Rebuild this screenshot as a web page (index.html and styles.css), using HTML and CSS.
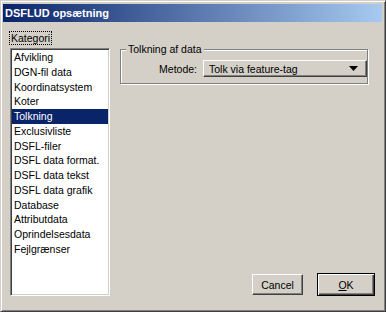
FILE: index.html
```html
<!DOCTYPE html>
<html lang="da">
<head>
    <meta charset="UTF-8">
    <title>DSFLUD opsætning</title>
    <link rel="stylesheet" href="styles.css">
</head>
<body>
    <div class="window">
        <div class="titlebar">DSFLUD opsætning</div>

        <div class="content">
            <div class="left-col">
                <span class="label-focus">Kategori</span>
                <ul class="listbox">
                    <li>Afvikling</li>
                    <li>DGN-fil data</li>
                    <li>Koordinatsystem</li>
                    <li>Koter</li>
                    <li class="selected">Tolkning</li>
                    <li>Exclusivliste</li>
                    <li>DSFL-filer</li>
                    <li>DSFL data format.</li>
                    <li>DSFL data tekst</li>
                    <li>DSFL data grafik</li>
                    <li>Database</li>
                    <li>Attributdata</li>
                    <li>Oprindelsesdata</li>
                    <li>Fejlgrænser</li>
                </ul>
            </div>

            <div class="right-col">
                <fieldset class="groupbox">
                    <legend>Tolkning af data</legend>
                    <div class="field-row">
                        <span>Metode:</span>
                        <div class="combo">
                            <span>Tolk via feature-tag</span>
                            <svg class="combo-arrow" width="9" height="5" viewBox="0 0 9 5">
                                <polygon points="0,0 9,0 4.5,5" fill="#000"/>
                            </svg>
                        </div>
                    </div>
                </fieldset>

                <div class="buttons">
                    <button class="btn">Cancel</button>
                    <button class="btn default"><u>O</u>K</button>
                </div>
            </div>
        </div>
    </div>
</body>
</html>
```

FILE: styles.css
```css
body {
    margin: 0;
    font-family: 'Liberation Sans', Arial, sans-serif;
    font-size: 10.5px;
    color: #000;
    background-color: #d4d0c8;
}

.window {
    box-sizing: border-box;
    width: 386px;
    height: 312px;
    background-color: #d4d0c8;
    border-top: 1px solid #d4d0c8;
    border-left: 1px solid #d4d0c8;
    border-right: 1px solid #404040;
    border-bottom: 1px solid #404040;
    box-shadow: inset 1px 1px 0 #fff, inset -1px -1px 0 #808080;
    padding: 3px 3px 3px 2px;
    display: flex;
    flex-direction: column;
}

.titlebar {
    height: 18px;
    line-height: 18px;
    padding-left: 2px;
    background: linear-gradient(to right, #0a246a, #a6caf0);
    color: #fff;
    font-weight: bold;
    font-size: 11px;
}

.content {
    flex: 1;
    display: flex;
    padding: 9px 7px 12px 6px;
}

.left-col {
    display: flex;
    flex-direction: column;
    align-items: flex-start;
}

.label-focus {
    border: 1px dotted #000;
    padding: 0 1px;
    line-height: 12px;
}

.listbox {
    list-style: none;
    margin: 3px 0 0 1px;
    padding: 1px 0 0 0;
    box-sizing: border-box;
    width: 100px;
    flex: 1;
    background-color: #fff;
    border-top: 1px solid #808080;
    border-left: 1px solid #808080;
    border-right: 1px solid #fff;
    border-bottom: 1px solid #fff;
    box-shadow: inset 1px 1px 0 #404040, inset -1px -1px 0 #d4d0c8;
}

.listbox li {
    height: 14.75px;
    line-height: 14.75px;
    margin: 0 1px;
    padding-left: 2px;
    white-space: nowrap;
}

.listbox li.selected {
    background-color: #0a246a;
    color: #fff;
}

.right-col {
    flex: 1;
    display: flex;
    flex-direction: column;
    justify-content: space-between;
    margin-left: 10px;
}

.groupbox {
    margin: 12px 7px 0 0;
    padding: 5px 0 6px 0;
    border: 1px solid #808080;
    box-shadow: inset 1px 1px 0 #fff, 1px 1px 0 #fff;
}

.groupbox legend {
    margin-left: 5px;
    padding: 0 2px;
    line-height: 12px;
    background-color: #d4d0c8;
}

.field-row {
    display: flex;
    align-items: center;
    justify-content: flex-end;
    gap: 6px;
}

.combo {
    box-sizing: border-box;
    width: 164px;
    height: 17px;
    display: flex;
    align-items: center;
    justify-content: space-between;
    padding: 0 8px 0 5px;
    border-top: 1px solid #fff;
    border-left: 1px solid #fff;
    border-right: 1px solid #404040;
    border-bottom: 1px solid #404040;
    box-shadow: inset -1px -1px 0 #808080;
}

.buttons {
    display: flex;
    justify-content: flex-end;
    align-items: center;
    gap: 14px;
}

.btn {
    box-sizing: border-box;
    width: 51px;
    height: 21px;
    padding: 0;
    font-family: inherit;
    font-size: 10.5px;
    color: #000;
    background-color: #d4d0c8;
    border-top: 1px solid #fff;
    border-left: 1px solid #fff;
    border-right: 1px solid #404040;
    border-bottom: 1px solid #404040;
    box-shadow: inset -1px -1px 0 #808080;
}

.btn.default {
    width: 58px;
    height: 23px;
    outline: none;
    border: 1px solid #000;
    box-shadow: inset 1px 1px 0 #fff, inset -1px -1px 0 #404040, inset -2px -2px 0 #808080;
}
```
